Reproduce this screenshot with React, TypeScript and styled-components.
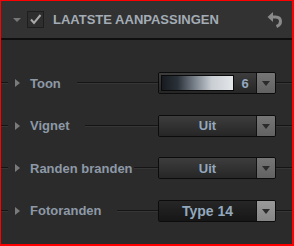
import React from "react";
import styled, { createGlobalStyle } from "styled-components";

const Global = createGlobalStyle`
  html, body { margin: 0; padding: 0; background: #2b2b2b; }
  body { font-family: "Liberation Sans", Arial, sans-serif; }
`;

const Frame = styled.div`
  width: 294px;
  height: 246px;
  box-sizing: border-box;
  border-style: solid;
  border-color: #ff0000;
  border-width: 1px 2px 2px 1px;
  background: #2b2b2b;
  display: flex;
  flex-direction: column;
  overflow: hidden;
`;

const Header = styled.div`
  height: 37px;
  flex: none;
  background: #323232;
  border-bottom: 2px solid #0f0f0f;
  display: flex;
  align-items: center;
  padding: 0 9px 0 12px;
`;

const DownTri = styled.div`
  width: 0;
  height: 0;
  border-left: 4.5px solid transparent;
  border-right: 4.5px solid transparent;
  border-top: 4px solid #777;
  margin-top: 1px;
`;

const Check = styled.div`
  width: 17px;
  height: 17px;
  box-sizing: border-box;
  border: 1px solid #1e1e1e;
  background: #2e2e2e;
  margin-left: 6px;
  display: flex;
  align-items: center;
  justify-content: center;
`;

const Title = styled.div`
  margin-left: 9px;
  font-size: 13px;
  font-weight: bold;
  color: #a3acb5;
  white-space: nowrap;
`;

const UndoBtn = styled.div`
  margin-left: auto;
  width: 16px;
  height: 16px;
  display: flex;
`;

const Body = styled.div`
  padding-top: 32px;
  display: flex;
  flex-direction: column;
  gap: 20.5px;
`;

const Row = styled.div`
  height: 22px;
  display: flex;
  align-items: center;
`;

const Line = styled.div<{ $w?: number; $ml?: number }>`
  height: 2px;
  box-sizing: border-box;
  border-top: 1px solid #151515;
  border-bottom: 1px solid #363636;
  ${(p) => (p.$w !== undefined ? `width: ${p.$w}px; flex: none;` : `flex: 1; min-width: 0;`)}
  margin-left: ${(p) => p.$ml ?? 0}px;
`;

const RightTri = styled.div`
  width: 0;
  height: 0;
  border-top: 4.5px solid transparent;
  border-bottom: 4.5px solid transparent;
  border-left: 5px solid #7a7a7a;
  margin-left: 7px;
  flex: none;
`;

const Label = styled.div`
  margin-left: 10px;
  font-size: 13px;
  font-weight: bold;
  color: #8d99a6;
  white-space: nowrap;
  flex: none;
`;

const Dropdown = styled.div`
  width: 118px;
  height: 22px;
  flex: none;
  box-sizing: border-box;
  border: 1px solid #0c0c0c;
  border-radius: 2px;
  display: flex;
  overflow: hidden;
`;

const Main = styled.div<{ $dark?: boolean }>`
  flex: 1;
  display: flex;
  align-items: center;
  justify-content: center;
  background: ${(p) =>
    p.$dark
      ? "linear-gradient(#262626, #161616)"
      : "linear-gradient(#3d3d3d, #262626)"};
`;

const Value = styled.span<{ $size?: number }>`
  font-size: ${(p) => p.$size ?? 13}px;
  font-weight: bold;
  color: #93a8bd;
  white-space: nowrap;
`;

const Preview = styled.div`
  width: 73px;
  height: 16px;
  box-sizing: border-box;
  margin-left: 2px;
  border: 1px solid #0a0a0a;
  flex: none;
  background: linear-gradient(
    to right,
    #171b20 0%,
    #2b3139 22%,
    #7f8790 48%,
    #c9ced3 70%,
    #e3e6e9 100%
  );
`;

const ValueCell = styled.div`
  flex: 1;
  display: flex;
  justify-content: center;
  align-items: center;
`;

const ArrowBtn = styled.div<{ $light?: boolean }>`
  width: 18px;
  flex: none;
  border-left: 1px solid #111;
  background: ${(p) =>
    p.$light
      ? "linear-gradient(#9a9a9a, #858585)"
      : "linear-gradient(#767676, #626262)"};
  display: flex;
  align-items: center;
  justify-content: center;
`;

const ArrowTri = styled.div`
  width: 0;
  height: 0;
  border-left: 4.5px solid transparent;
  border-right: 4.5px solid transparent;
  border-top: 5px solid #2b2b2b;
  margin-top: 1px;
`;

type RowProps = {
  label: string;
  gap: number;
  children: React.ReactNode;
};

function SettingRow({ label, gap, children }: RowProps) {
  return (
    <Row>
      <Line $w={7} />
      <RightTri />
      <Label>{label}</Label>
      <Line $ml={gap} />
      {children}
      <Line $w={16} />
    </Row>
  );
}

function Select({ value, dark, size }: { value: string; dark?: boolean; size?: number }) {
  return (
    <Dropdown>
      <Main $dark={dark}>
        <Value $size={size}>{value}</Value>
      </Main>
      <ArrowBtn $light={dark}>
        <ArrowTri />
      </ArrowBtn>
    </Dropdown>
  );
}

export default function App() {
  return (
    <>
      <Global />
      <Frame>
        <Header>
          <DownTri />
          <Check>
            <svg width="13" height="13" viewBox="0 0 13 13">
              <path d="M2 6.5 L5 10 L11.5 2" fill="none" stroke="#a9a9a9" strokeWidth="2" />
            </svg>
          </Check>
          <Title>LAATSTE AANPASSINGEN</Title>
          <UndoBtn>
            <svg width="16" height="16" viewBox="0 0 16 16">
              <path d="M0.5 5 L6 0 L6 10 Z" fill="#8a8a8a" />
              <path
                d="M5.5 5 H8.5 C12 5 13.5 7 13.5 9.5 C13.5 12 12 13.5 9.5 14.5"
                fill="none"
                stroke="#8a8a8a"
                strokeWidth="3"
              />
            </svg>
          </UndoBtn>
        </Header>
        <Body>
          <SettingRow label="Toon" gap={16}>
            <Dropdown>
              <Main>
                <Preview />
                <ValueCell>
                  <Value>6</Value>
                </ValueCell>
              </Main>
              <ArrowBtn>
                <ArrowTri />
              </ArrowBtn>
            </Dropdown>
          </SettingRow>
          <SettingRow label="Vignet" gap={15}>
            <Select value="Uit" />
          </SettingRow>
          <SettingRow label="Randen branden" gap={1}>
            <Select value="Uit" />
          </SettingRow>
          <SettingRow label="Fotoranden" gap={15}>
            <Select value="Type 14" dark size={14} />
          </SettingRow>
        </Body>
      </Frame>
    </>
  );
}
